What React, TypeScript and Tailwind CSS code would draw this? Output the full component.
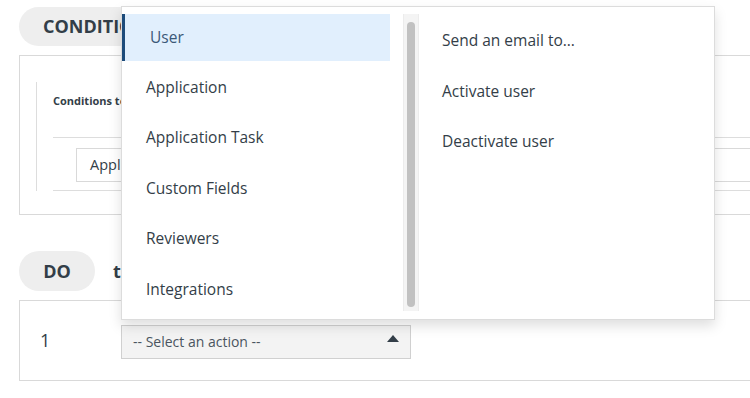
import React from "react";

/* Rule builder — "CONDITIONS" / "DO" blocks with the action menu open */

const categories = [
  "User",
  "Application",
  "Application Task",
  "Custom Fields",
  "Reviewers",
  "Integrations",
];

const userActions = ["Send an email to...", "Activate user", "Deactivate user"];

const font = { fontFamily: '"Open Sans", "Noto Sans", sans-serif' };

function CaretDown() {
  return (
    <svg width="12" height="7" viewBox="0 0 12 7">
      <path d="M0 0h12L6 7z" fill="#333e48" />
    </svg>
  );
}

function CaretUp() {
  return (
    <svg width="12" height="7" viewBox="0 0 12 7">
      <path d="M0 7h12L6 0z" fill="#333e48" />
    </svg>
  );
}

function ActionMenu() {
  return (
    <div className="absolute left-[121px] top-[6px] flex h-[314px] w-[594px] border border-[#dcdcdc] bg-white shadow-[0_6px_12px_rgba(0,0,0,0.13)]">
      {/* Categories */}
      <div className="flex w-[268px] shrink-0 flex-col pt-[7px]">
        {categories.map((c, i) => (
          <div
            key={c}
            className={
              i === 0
                ? "flex h-[47px] items-center border-l-[3px] border-[#1d4b7a] bg-[#e1effd] pl-[25px] text-[15.5px] text-[#3b5878]"
                : "flex h-[50.5px] items-center pl-[24px] pt-[2px] text-[15.5px] text-[#333e48]"
            }
          >
            {c}
          </div>
        ))}
      </div>

      {/* Scrollbar */}
      <div className="ml-[13px] mt-[7px] flex h-[297px] w-[16px] justify-center border-x border-[#ececec] bg-[#f4f4f4] pt-[8px]">
        <div className="h-[285px] w-[8px] rounded-full bg-[#c1c1c1]" />
      </div>

      {/* Actions */}
      <div className="flex flex-col pl-[23px] pt-[18px]">
        {userActions.map((a) => (
          <div key={a} className="flex h-[50.5px] items-start pt-[4px] text-[15.5px] text-[#333e48]">
            {a}
          </div>
        ))}
      </div>
    </div>
  );
}

export default function App() {
  return (
    <div className="relative h-[398px] w-[750px] overflow-hidden bg-white" style={font}>
      <div className="w-[820px] pl-[19px] pt-[7px]">
        {/* CONDITIONS */}
        <div className="flex h-[39px] w-[150px] items-center rounded-full bg-[#eeeeee] pl-[24px] text-[18px] font-bold text-[#333e48]">
          CONDITIONS
        </div>
        <div className="mt-[9px] h-[160px] border border-[#d9d9d9] pl-[16px] pt-[26px]">
          <div className="h-[109px] border-l border-[#dddddd] pl-[16px]">
            <div className="pt-[11px] text-[11px] font-bold text-[#333e48]">Conditions to match</div>
            <div className="mt-[27px] border-t border-[#dddddd] pb-[8px] pl-[23px] pt-[10px]">
              <div className="flex h-[34px] items-center justify-between border border-[#d9d9d9] bg-white pl-[13px] pr-[24px] text-[14.5px] text-[#333e48]">
                <span>Application</span>
                <CaretDown />
              </div>
            </div>
            <div className="border-t border-[#dddddd]" />
          </div>
        </div>

        {/* DO */}
        <div className="mt-[36px] flex items-center">
          <div className="flex h-[40px] w-[76px] items-center justify-center rounded-full bg-[#eeeeee] text-[18px] font-bold text-[#333e48]">
            DO
          </div>
          <div className="ml-[18px] text-[18px] font-bold text-[#333e48]">these actions</div>
        </div>
        <div className="mt-[9px] flex h-[81px] items-center border border-[#d9d9d9] pl-[20px]">
          <div className="w-[81px] text-[18px] text-[#333e48]">1</div>
          <div className="mt-[2px] flex h-[34px] w-[290px] items-center justify-between border border-[#d0d0d0] bg-[#f3f3f3] pl-[11px] pr-[11px] text-[14px] text-[#4a5560]">
            <span>-- Select an action --</span>
            <span className="-mt-[6px]">
              <CaretUp />
            </span>
          </div>
        </div>
      </div>

      <ActionMenu />
    </div>
  );
}
